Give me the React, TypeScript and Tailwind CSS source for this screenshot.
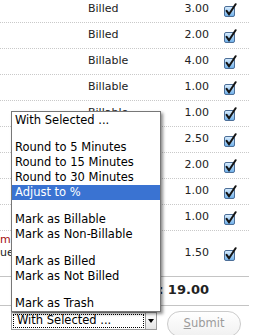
import React from "react";

const rows = [
  { status: "Billed", hours: "3.00" },
  { status: "Billed", hours: "2.00" },
  { status: "Billable", hours: "4.00" },
  { status: "Billable", hours: "1.00" },
  { status: "Billable", hours: "1.00" },
  { status: "", hours: "2.50" },
  { status: "", hours: "2.00" },
  { status: "", hours: "1.00" },
  { status: "", hours: "1.00" },
];

const menu: (string | null)[] = [
  "With Selected ...",
  null,
  "Round to 5 Minutes",
  "Round to 15 Minutes",
  "Round to 30 Minutes",
  "Adjust to %",
  null,
  "Mark as Billable",
  "Mark as Non-Billable",
  null,
  "Mark as Billed",
  "Mark as Not Billed",
  null,
  "Mark as Trash",
];

function Checkbox() {
  return (
    <svg width="14" height="14" viewBox="0 0 14 14" className="block">
      <defs>
        <linearGradient id="cbfill" x1="0" y1="0" x2="0" y2="1">
          <stop offset="0" stopColor="#dcefff" />
          <stop offset="1" stopColor="#6caee9" />
        </linearGradient>
      </defs>
      <rect x="1.5" y="3.5" width="10" height="10" rx="1.5" fill="url(#cbfill)" stroke="#4d6f98" />
      <path d="M3.6 7.8 L6 11.2 L12.6 1.2" fill="none" stroke="#141414" strokeWidth="2" strokeLinecap="round" />
    </svg>
  );
}

export default function App() {
  return (
    <div className="relative w-[255px] h-[335px] overflow-hidden bg-white font-['DejaVu_Sans',sans-serif] text-[11px] text-[#222]">
      <div className="w-[249px] -mt-[3px]">
        {rows.map((r, i) => (
          <div key={i} className="flex h-[26px] items-center border-b border-dotted border-[#c9c9c9]">
            <div className="w-[88px] shrink-0" />
            <div className="w-[82px] shrink-0">{r.status}</div>
            <div className="w-[39px] shrink-0 text-right">{r.hours}</div>
            <div className="ml-[14px] shrink-0">
              <Checkbox />
            </div>
          </div>
        ))}

        {/* tall row */}
        <div className="flex h-[46px] items-center border-b border-[#c4c4c4]">
          <div className="w-[88px] shrink-0 self-start pt-[2px] leading-[13px]">
            <div className="text-[#a40f0f]">mi</div>
            <div>ue</div>
          </div>
          <div className="w-[82px] shrink-0" />
          <div className="w-[39px] shrink-0 text-right">1.50</div>
          <div className="ml-[14px] shrink-0">
            <Checkbox />
          </div>
        </div>

        {/* total */}
        <div className="flex h-[29px] items-center border-b border-[#c4c4c4] pb-[2px]">
          <div className="w-[209px] text-right text-[13px] font-bold text-[#222]">: 19.00</div>
        </div>

        {/* actions */}
        <div className="flex items-start">
          <div className="ml-[11px] mt-[6px] flex h-[18px] w-[146px] border border-[#9c9c9c] bg-white">
            <div className="m-[1px] flex flex-1 items-center pl-[4px] outline outline-1 outline-dotted outline-black -outline-offset-1 text-[11.5px] text-black">
              With Selected ...
            </div>
            <div className="flex w-[11px] items-center justify-center border-l border-[#9c9c9c] bg-gradient-to-b from-white to-[#e4e4e4]">
              <div className="h-0 w-0 border-x-[3px] border-t-[4px] border-x-transparent border-t-black" />
            </div>
          </div>
          <div className="ml-[10px] mt-[5px] flex h-[26px] w-[74px] items-center justify-center rounded-full border border-[#cbcbcb] bg-gradient-to-b from-white to-[#f1f1f1] text-[11.5px] text-[#9b9b9b]">
            <span>
              <span className="underline">S</span>ubmit
            </span>
          </div>
        </div>
      </div>

      {/* open dropdown menu */}
      <div className="absolute left-[11px] top-[111px] w-[150px] border border-[#777] bg-white pt-[1px] shadow-[2px_2px_3px_rgba(0,0,0,0.45)] text-[11.5px] text-black">
        {menu.map((m, i) =>
          m === null ? (
            <div key={i} className="h-[12px]" />
          ) : (
            <div
              key={i}
              className={
                m === "Adjust to %"
                  ? "flex h-[15px] items-center bg-[#3a73d2] pl-[3px] text-white"
                  : "flex h-[15px] items-center pl-[3px]"
              }
            >
              {m}
            </div>
          )
        )}
      </div>
    </div>
  );
}
